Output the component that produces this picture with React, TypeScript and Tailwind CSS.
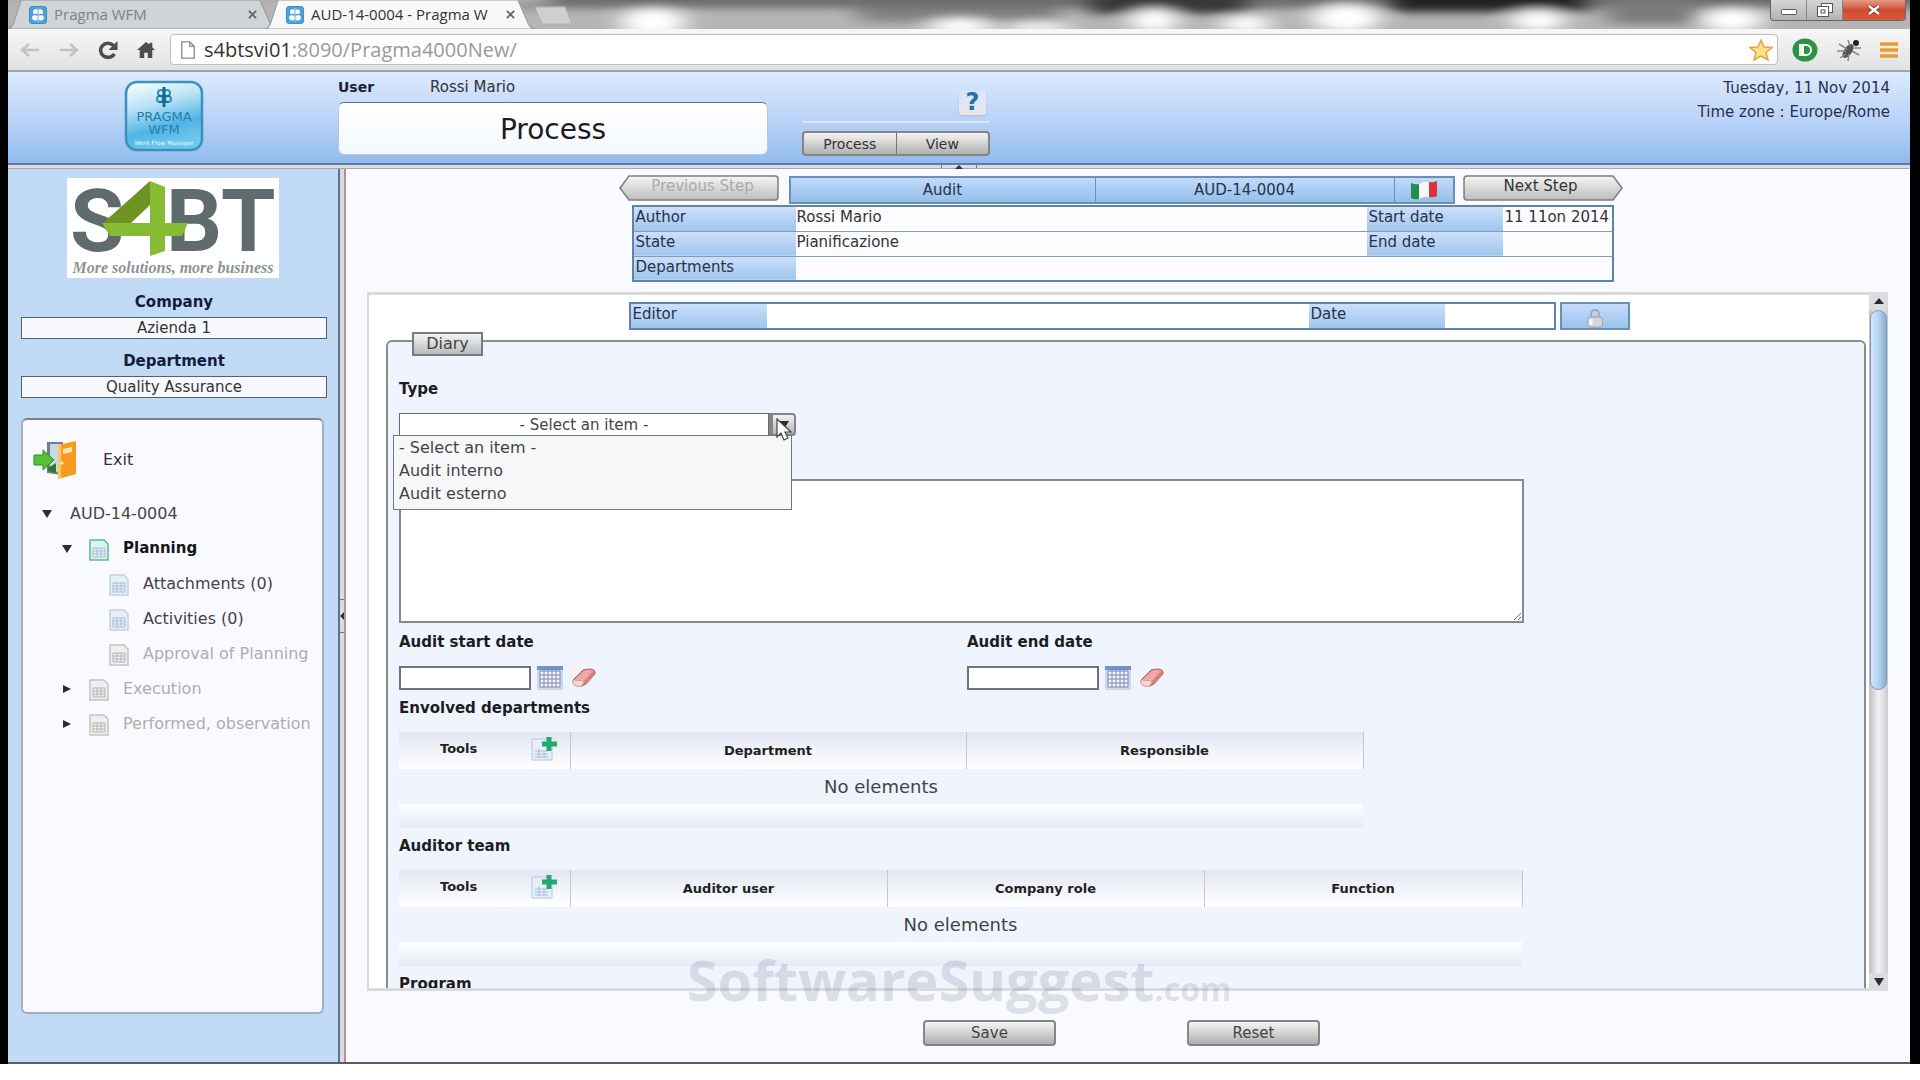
import { useState } from "react";
import type { ReactNode } from "react";

interface TreeItem {
  label: string;
  level: number;
  arrow?: "down" | "right";
  icon?: "active" | "normal" | "disabled";
}

interface GridColumn {
  label: string;
  width: string;
}

const treeItems: TreeItem[] = [
  { label: "AUD-14-0004", level: 0, arrow: "down" },
  { label: "Planning", level: 1, arrow: "down", icon: "active" },
  { label: "Attachments (0)", level: 2, icon: "normal" },
  { label: "Activities (0)", level: 2, icon: "normal" },
  { label: "Approval of Planning", level: 2, icon: "disabled" },
  { label: "Execution", level: 1, arrow: "right", icon: "disabled" },
  { label: "Performed, observation", level: 1, arrow: "right", icon: "disabled" },
];

const auditTypes = ["- Select an item -", "Audit interno", "Audit esterno"];

const departmentColumns: GridColumn[] = [
  { label: "Department", width: "w-[396px]" },
  { label: "Responsible", width: "w-[397px]" },
];

const teamColumns: GridColumn[] = [
  { label: "Auditor user", width: "w-[317px]" },
  { label: "Company role", width: "w-[317px]" },
  { label: "Function", width: "w-[318px]" },
];

/* ---------- icons ---------- */

function Emblem({ className }: { className?: string }) {
  return (
    <svg viewBox="0 0 20 20" className={className}>
      <rect x="0.5" y="0.5" width="19" height="19" rx="3" fill="#4aa3d8" stroke="#2f86bd" />
      <ellipse cx="7.5" cy="6.5" rx="3" ry="3" fill="#fff" />
      <ellipse cx="12.5" cy="6.5" rx="3" ry="3" fill="#fff" />
      <ellipse cx="7" cy="13" rx="3.5" ry="3" fill="#fff" />
      <ellipse cx="13" cy="13" rx="3.5" ry="3" fill="#fff" />
      <path d="M10 2v16" stroke="#8cc4e6" strokeWidth="1.5" />
      <circle cx="7.5" cy="9.5" r="1" fill="#2f86bd" />
      <circle cx="12.5" cy="9.5" r="1" fill="#2f86bd" />
    </svg>
  );
}

function PragmaLogo() {
  return (
    <svg viewBox="0 0 80 72" className="h-[72px] w-20">
      <defs>
        <linearGradient id="pragma" x1="0" y1="0" x2="0.3" y2="1">
          <stop offset="0" stopColor="#ffffff" />
          <stop offset="0.4" stopColor="#b8e2f6" />
          <stop offset="0.75" stopColor="#4fb4e3" />
          <stop offset="1" stopColor="#6cc6ec" />
        </linearGradient>
      </defs>
      <rect x="2" y="2" width="76" height="68" rx="11" fill="url(#pragma)" stroke="#3f8fbf" strokeWidth="2.5" />
      <g fill="none" stroke="#2b93c4" strokeWidth="2">
        <circle cx="37" cy="13" r="3" />
        <circle cx="43" cy="13" r="3" />
        <circle cx="36" cy="19" r="3" />
        <circle cx="44" cy="19" r="3" />
      </g>
      <path d="M40 7v20" stroke="#17688f" strokeWidth="3" />
      <path d="M34 16h12M35 22h10" stroke="#17688f" strokeWidth="1.5" />
      <text x="40" y="41" textAnchor="middle" fontSize="13" fill="#2580b0" fontFamily="DejaVu Sans, sans-serif">
        PRAGMA
      </text>
      <text x="40" y="54" textAnchor="middle" fontSize="13" fill="#2580b0" fontFamily="DejaVu Sans, sans-serif">
        WFM
      </text>
      <text x="40" y="65" textAnchor="middle" fontSize="6" fill="#e9f8ff" fontFamily="DejaVu Sans, sans-serif">
        Work Flow Manager
      </text>
    </svg>
  );
}

function CompanyLogo() {
  return (
    <svg viewBox="0 0 212 100" className="h-[100px] w-[212px] overflow-visible bg-white">
      <g fontFamily="Roboto, sans-serif" fontWeight="700" fontSize="88" fill="#5f6b6c">
        <text x="3" y="73">S</text>
        <text x="99" y="73">B</text>
        <text x="154" y="73">T</text>
      </g>
      <path d="M83 3 L36 45 L64 45 L83 27z" fill="#6f9322" />
      <path d="M83 3 L98 9 L98 73 L83 78z" fill="#86bc34" />
      <path d="M35 45 L121 45 L115 58 L43 58z" fill="#86bc34" />
      <text
        x="106"
        y="95"
        textAnchor="middle"
        fontSize="16"
        fontStyle="italic"
        fontWeight="700"
        fill="#8b9494"
        fontFamily="Liberation Serif, serif"
      >
        More solutions, more business
      </text>
    </svg>
  );
}

function ExitIcon() {
  return (
    <svg viewBox="0 0 44 40" className="h-10 w-11">
      <path d="M14 2h16v33l-16-2z" fill="#6f7f8c" />
      <path d="M17 4h10v28l-10-1z" fill="#c9d8e2" />
      <path d="M25 5 L43 1 L43 34 L25 39z" fill="#f79a1e" />
      <path d="M25 5 L28 4 L28 38 L25 39z" fill="#ffc56b" />
      <path d="M30 9 l9-2 v5 l-9 2z" fill="#ffe6b5" />
      <circle cx="29" cy="23" r="1.5" fill="#fff3d6" />
      <path d="M15 28l8-5v10l-8-2z" fill="#2f7a22" />
      <path d="M1 15h9v-5l11 10-11 10v-5H1z" fill="#56c136" stroke="#2f8f1f" />
    </svg>
  );
}

function SheetIcon({ kind }: { kind: "active" | "normal" | "disabled" }) {
  const stroke = kind === "active" ? "#55bf85" : kind === "normal" ? "#c3d1e0" : "#c4c4c4";
  const fill = kind === "active" ? "#dcf5ec" : kind === "normal" ? "#e6eff8" : "#efefef";
  const line = kind === "active" ? "#b3b6de" : kind === "normal" ? "#a9bdd6" : "#b4b4b4";
  return (
    <svg viewBox="0 0 20 22" className="mt-[3px] h-[22px] w-5 shrink-0">
      <path d="M1 1h14l4 4v16H1z" fill={fill} stroke={stroke} strokeWidth="1.5" />
      <path d="M4 9h12v9H4zM4 12h12M4 15h12M8 9v9M12 9v9" fill="none" stroke={line} />
    </svg>
  );
}

function CalendarIcon() {
  return (
    <svg viewBox="0 0 26 24" className="h-6 w-[26px]">
      <rect x="0" y="0" width="26" height="24" fill="#c9d9ee" />
      <rect x="0" y="0" width="26" height="4" fill="#6e95c6" />
      <rect x="3" y="5" width="20" height="16" fill="#f4f5fb" />
      <path
        d="M3 5h20M3 9h20M3 13h20M3 17h20M3 21h20M3 5v16M7 5v16M11 5v16M15 5v16M19 5v16M23 5v16"
        stroke="#7f83b4"
        fill="none"
      />
    </svg>
  );
}

function EraserIcon() {
  return (
    <svg viewBox="0 0 26 20" className="h-5 w-[26px]">
      <path d="M2 12 L12 2 Q14 1 20 1 Q25 2 24 6 L15 16 Q12 19 6 18 Q1 17 2 12z" fill="#d97f7f" stroke="#b76d6d" />
      <path d="M3 12 L13 3 Q18 1 22 3 L13 13z" fill="#eda9a6" />
      <path d="M2 12 l11 1 -2 5 q-4 1 -8-1 q-2-1-1-5z" fill="#f7d6d1" stroke="#c98d88" strokeWidth="0.5" />
    </svg>
  );
}

function AddRowIcon() {
  return (
    <svg viewBox="0 0 26 24" className="h-6 w-[26px]">
      <path d="M1 2h14l6 5v16H1z" fill="#e6eff8" stroke="#b5c8dc" />
      <path d="M4 14h13M4 17h13M4 20h13M8 11v10M13 14v7" stroke="#a9bdd6" />
      <path d="M18 0v14M11 7h15" stroke="#27a872" strokeWidth="5" />
    </svg>
  );
}

function LockIcon() {
  return (
    <svg viewBox="0 0 18 20" className="h-5 w-[18px]">
      <path d="M5 10V6a4 4 0 0 1 8 0v4" fill="none" stroke="#a5adb8" strokeWidth="2" />
      <rect x="1.5" y="9" width="15" height="10" rx="3" fill="#d5d5d5" stroke="#9fa2a8" />
      <path d="M5 11v6" stroke="#f5f5f5" strokeWidth="3" />
    </svg>
  );
}

function FlagIcon() {
  return (
    <svg viewBox="0 0 28 20" className="h-5 w-7">
      <path d="M1 3 Q5 5 9 4 V19 Q5 20 1 18z" fill="#1f8f4e" />
      <path d="M9 4 Q14 1 19 2 V17 Q14 16 9 19z" fill="#f7f7f7" />
      <path d="M19 2 Q23 3 27 1 V16 Q23 18 19 17z" fill="#dc3434" />
    </svg>
  );
}

function Triangle({ dir }: { dir: "up" | "down" | "right" }) {
  const shapes = {
    up: "M5 2 L10 8 L0 8z",
    down: "M0 1 L10 1 L5 9z",
    right: "M1 1 L9 5 L1 9z",
  };
  return (
    <svg viewBox="0 0 10 10" className="h-[10px] w-[10px] shrink-0">
      <path d={shapes[dir]} fill="#2c2c2c" />
    </svg>
  );
}

/* ---------- browser chrome ---------- */

function BrowserTab({ title, active }: { title: string; active?: boolean }) {
  return (
    <div className={active ? "relative -ml-3 h-[29px] w-[270px]" : "relative h-[29px] w-[269px]"}>
      <svg viewBox="0 0 268 29" preserveAspectRatio="none" className="absolute inset-0 h-full w-full">
        <path d="M0 29 Q4 28 6 22 L13 0 H251 L261 23 Q263 28 268 29z" fill={active ? "#f8f8f8" : "#cfd5d6"} stroke="#9a9a9a" />
      </svg>
      <button
        type="button"
        className="relative flex h-full w-full items-center pr-5 pl-5 text-left font-['Open_Sans',sans-serif] text-[15px]"
      >
        <Emblem className="h-[18px] w-5 shrink-0" />
        <span className={active ? "ml-[6px] flex-1 truncate text-[#333]" : "ml-[6px] flex-1 truncate text-[#7d8283]"}>{title}</span>
        <svg viewBox="0 0 10 10" className="h-[9px] w-[9px]">
          <path d="M1 1l8 8M9 1l-8 8" stroke="#666" strokeWidth="2" />
        </svg>
      </button>
    </div>
  );
}

function BrowserChrome() {
  return (
    <div>
      <div className="relative flex h-[29px] overflow-hidden bg-[#b5b5b5]">
        <svg viewBox="0 0 1902 29" preserveAspectRatio="none" className="absolute inset-0 h-full w-full">
          <defs>
            <filter id="glass" x="-10%" y="-80%" width="120%" height="260%">
              <feGaussianBlur stdDeviation="12 4" />
            </filter>
          </defs>
          <g filter="url(#glass)">
            <rect x="500" y="-14" width="1420" height="22" fill="#6c6c6c" />
            <rect x="1080" y="-10" width="160" height="24" fill="#383838" />
            <rect x="1380" y="-10" width="200" height="22" fill="#222" />
            <rect x="850" y="8" width="200" height="14" fill="#828282" />
            <rect x="1600" y="0" width="90" height="24" fill="#7c7c7c" />
            <rect x="-20" y="-10" width="560" height="14" fill="#b5aeae" />
            <ellipse cx="645" cy="22" rx="32" ry="14" fill="#fff" />
            <ellipse cx="952" cy="26" rx="32" ry="8" fill="#fff" />
            <ellipse cx="1030" cy="27" rx="32" ry="6" fill="#f4f4f4" />
            <ellipse cx="1146" cy="20" rx="24" ry="12" fill="#fff" />
            <ellipse cx="1238" cy="24" rx="24" ry="9" fill="#fff" />
            <ellipse cx="1338" cy="18" rx="34" ry="14" fill="#fff" />
            <ellipse cx="1530" cy="20" rx="26" ry="11" fill="#fff" />
            <ellipse cx="1724" cy="20" rx="30" ry="12" fill="#fff" />
          </g>
        </svg>
        <BrowserTab title="Pragma WFM" />
        <BrowserTab title="AUD-14-0004 - Pragma W" active />
        <svg viewBox="0 0 40 29" className="relative h-[29px] w-10">
          <path d="M0 7 H30 L37 24 H7z" fill="#cfcfcf" stroke="#b0b0b0" />
        </svg>
        <div className="relative mr-1 ml-auto flex h-[21px] overflow-hidden rounded-b border border-t-0 border-[#666] bg-gradient-to-b from-[#d5d5d5] to-[#b3b3b3]">
          <button type="button" aria-label="Minimize" className="flex w-9 items-center justify-center border-r border-[#888]">
            <svg viewBox="0 0 16 6" className="mt-1 h-[6px] w-4">
              <rect x="0.5" y="0.5" width="15" height="5" rx="1" fill="#fff" stroke="#555" />
            </svg>
          </button>
          <button type="button" aria-label="Restore" className="flex w-9 items-center justify-center border-r border-[#888]">
            <svg viewBox="0 0 16 14" className="h-[14px] w-4">
              <rect x="4.5" y="0.5" width="11" height="9" fill="#fff" stroke="#555" />
              <rect x="0.5" y="3.5" width="11" height="10" fill="#fff" stroke="#555" />
              <rect x="4" y="7" width="4" height="3" fill="none" stroke="#555" />
            </svg>
          </button>
          <button type="button" aria-label="Close" className="flex w-[62px] items-center justify-center bg-gradient-to-b from-[#e39a87] via-[#cf4a2e] to-[#d9593a]">
            <svg viewBox="0 0 12 10" className="h-[10px] w-3">
              <path d="M1 1l10 8M11 1l-10 8" stroke="#6d3226" strokeWidth="4" />
              <path d="M1 1l10 8M11 1l-10 8" stroke="#fff" strokeWidth="2.5" />
            </svg>
          </button>
        </div>
      </div>

      <div className="flex h-[43px] items-center border-b-2 border-[#98a5b5] bg-gradient-to-b from-[#f7f7f7] to-[#e2e2e2]">
        <div className="flex w-[162px] items-center gap-[19px] pl-3">
          <svg viewBox="0 0 20 16" className="h-4 w-5">
            <path d="M19 8H2M9 2L2 8l7 6" fill="none" stroke="#c2c2c2" strokeWidth="2.5" />
          </svg>
          <svg viewBox="0 0 20 16" className="h-4 w-5">
            <path d="M1 8h17M11 2l7 6-7 6" fill="none" stroke="#c2c2c2" strokeWidth="2.5" />
          </svg>
          <svg viewBox="0 0 20 18" className="h-[18px] w-5">
            <path d="M16.500 13A7.500 7 0 1 1 15.500 4.500" fill="none" stroke="#4d4d4d" strokeWidth="3.5" />
            <path d="M19.500 0v9h-9z" fill="#4d4d4d" />
          </svg>
          <svg viewBox="0 0 20 18" className="h-[18px] w-[18px]">
            <path d="M10 0L0 9h3v9h5v-6h4v6h5V9h3l-3-3V1h-3v2z" fill="#4d4d4d" />
          </svg>
        </div>
        <div className="flex h-[31px] flex-1 items-center rounded-sm border border-[#bdbdbd] bg-white pr-1 pl-[9px]">
          <svg viewBox="0 0 16 20" className="h-[18px] w-4">
            <path d="M1 1h9l5 5v13H1zM10 1v5h5" fill="#fff" stroke="#8d8d8d" strokeWidth="1.5" />
          </svg>
          <p className="ml-2 flex-1 font-['Open_Sans',sans-serif] text-[20px] leading-6 text-[#999]">
            <span className="text-[#333]">s4btsvi01</span>:8090/Pragma4000New/
          </p>
          <svg viewBox="0 0 24 22" className="h-[22px] w-6">
            <path d="M12 1l3 7 8 .5-6 5 2 7.5-7-4-7 4 2-7.500-6-5L9 8z" fill="#fbe08a" stroke="#e0a63c" strokeWidth="1.5" />
          </svg>
        </div>
        <div className="flex items-center gap-[18px] pr-3 pl-[14px]">
          <svg viewBox="0 0 26 24" className="h-6 w-[26px]">
            <ellipse cx="13" cy="12" rx="12.5" ry="11.5" fill="#2d9146" />
            <rect x="7" y="6" width="4" height="12" fill="#e5f5e8" />
            <path d="M11 7h3a5 5 0 0 1 0 10h-3z" fill="none" stroke="#fff" strokeWidth="2" />
          </svg>
          <svg viewBox="0 0 26 24" className="h-6 w-[26px]">
            <ellipse cx="12" cy="13" rx="4" ry="8" transform="rotate(35 12 13)" fill="#555" />
            <circle cx="20" cy="5" r="3" fill="#222" />
            <path d="M12 2l2 6M3 6l8 5M1 13h9M4 20l6-4M12 23l1-7M23 17l-7-4M25 10l-8 0" stroke="#888" strokeWidth="1.5" />
          </svg>
          <svg viewBox="0 0 18 18" className="h-[18px] w-[18px]">
            <path d="M0 3h18M0 9h18M0 15h18" stroke="#ec9a2d" strokeWidth="3.5" />
          </svg>
        </div>
      </div>
    </div>
  );
}

/* ---------- application ---------- */

function Header() {
  return (
    <header>
      <div className="flex h-[93px] items-start border-b-2 border-[#5f7da8] bg-gradient-to-b from-[#dceafd] via-[#bdd4f8] to-[#90bbee] pr-5">
        <div className="flex w-[330px] justify-center pt-2 pr-[18px]">
          <PragmaLogo />
        </div>
        <div className="w-[430px] pt-1 text-[15px] leading-[22px]">
          <p className="flex">
            <span className="w-[92px] text-[14px] font-bold text-[#1a2338]">User</span>
            <span>Rossi Mario</span>
          </p>
          <h1 className="mt-1 h-[53px] rounded-md border border-[#b9c7dc] border-t-[#5c7086] bg-gradient-to-b from-white to-[#f3f9ff] text-center text-[28px] leading-[54px] text-[#1c1c1c]">
            Process
          </h1>
        </div>
        <div className="ml-[34px] w-[188px] pt-[18px]">
          <div className="flex justify-end border-b-2 border-[#d8e6fa] pr-1 pb-[6px]">
            <button
              type="button"
              aria-label="Help"
              className="h-[25px] w-[27px] rounded bg-gradient-to-b from-[#d9e6fa] to-[#e9e6ea] text-[24px] leading-[25px] font-bold text-[#2272ac] shadow"
            >
              ?
            </button>
          </div>
          <div className="mt-2 flex h-[25px] overflow-hidden rounded border-2 border-[#858585] bg-gradient-to-b from-[#f5f5f5] to-[#b3b0b0] text-[14px] leading-5">
            <button type="button" className="flex-1 border-r border-[#777]">
              Process
            </button>
            <button type="button" className="flex-1">
              View
            </button>
          </div>
        </div>
        <div className="ml-auto pt-1 text-right text-[15px] leading-6 text-[#263050]">
          <p>Tuesday, 11 Nov 2014</p>
          <p>Time zone : Europe/Rome</p>
        </div>
      </div>
      <div className="flex h-1 justify-center border-b border-[#b3a3a3] bg-[#dcdce2]">
        <div className="flex w-9 justify-center border-x border-[#777]">
          <svg viewBox="0 0 8 4" className="h-1 w-2">
            <path d="M4 0l4 4H0z" fill="#333" />
          </svg>
        </div>
      </div>
    </header>
  );
}

function Sidebar() {
  return (
    <aside className="flex w-[330px] shrink-0 flex-col bg-[#c1daf5] pt-[9px] pr-[11px] pb-12 pl-[13px] text-[15px] leading-5">
      <div className="flex justify-center pr-[2px]">
        <CompanyLogo />
      </div>
      <p className="mt-[14px] text-center font-bold text-[#131c3a]">Company</p>
      <p className="mt-[5px] h-[22px] border border-[#555f72] bg-[#f8f9ff] text-center">Azienda 1</p>
      <p className="mt-3 text-center font-bold text-[#131c3a]">Department</p>
      <p className="mt-[5px] h-[22px] border border-[#555f72] bg-[#f8f9ff] text-center">Quality Assurance</p>
      <nav className="mt-5 mr-[3px] min-h-0 flex-1 overflow-hidden rounded-md border-2 border-[#a6aebb] border-t-[#77808c] bg-[#f9faff] text-base">
        <button type="button" className="mt-5 ml-[10px] flex items-center">
          <ExitIcon />
          <span className="ml-[26px]">Exit</span>
        </button>
        <ul className="mt-4">
          {treeItems.map((item) => (
            <li
              key={item.label}
              className={
                item.level === 0
                  ? "flex h-[35px] items-center pl-[19px] whitespace-nowrap"
                  : item.level === 1
                    ? "flex h-[35px] items-center pl-[39px] whitespace-nowrap"
                    : "flex h-[35px] items-center pl-[86px] whitespace-nowrap"
              }
            >
              {item.arrow && <Triangle dir={item.arrow} />}
              {item.icon && (
                <span className={item.level === 1 ? "ml-[17px]" : ""}>
                  <SheetIcon kind={item.icon} />
                </span>
              )}
              <a
                href="#"
                className={
                  item.icon === "active"
                    ? "ml-[14px] text-[15px] font-bold text-[#151515]"
                    : item.icon === "disabled"
                      ? "ml-[14px] text-[#aeaeae]"
                      : item.icon
                        ? "ml-[14px] text-[#444]"
                        : "ml-[18px] text-[#444]"
                }
              >
                {item.label}
              </a>
            </li>
          ))}
        </ul>
      </nav>
    </aside>
  );
}

function StepButton({ label, back, disabled }: { label: string; back?: boolean; disabled?: boolean }) {
  return (
    <button type="button" disabled={disabled} className="relative h-[26px] w-40 text-[15px] leading-[22px]">
      <svg viewBox="0 0 160 26" preserveAspectRatio="none" className="absolute inset-0 h-full w-full">
        <defs>
          <linearGradient id="step" x1="0" y1="0" x2="0" y2="1">
            <stop offset="0" stopColor="#f6f6f6" />
            <stop offset="1" stopColor="#bcbcbc" />
          </linearGradient>
        </defs>
        <path
          d={back ? "M1 13 L10 1 H156 Q159 1 159 4 V22 Q159 25 156 25 H10z" : "M159 13 L150 1 H4 Q1 1 1 4 V22 Q1 25 4 25 H150z"}
          fill="url(#step)"
          stroke="#7d7d7d"
          strokeWidth="1.5"
        />
      </svg>
      <span className={disabled ? "relative block pb-1 pl-2 text-[#aaa]" : "relative block pr-1 pb-1 text-[#333]"}>{label}</span>
    </button>
  );
}

function LabelCell({ children }: { children: ReactNode }) {
  return (
    <th scope="row" className="bg-gradient-to-b from-[#cde0fb] to-[#9fc5ec] p-0 pl-[2px] text-left align-top font-normal text-[#26324e]">
      {children}
    </th>
  );
}

function ProcessSummary() {
  return (
    <div className="flex flex-col items-center pt-[6px] pr-[14px] text-[15px] leading-5">
      <div className="flex">
        <StepButton label="Previous Step" back disabled />
        <div className="mt-px mr-2 ml-[10px] flex h-7 border-2 border-[#6b90b8] bg-gradient-to-b from-[#c3dafa] to-[#93bfea] text-center leading-[25px] text-[#26324e]">
          <p className="w-[305px] border-r border-[#6b90b8]">Audit</p>
          <p className="w-[299px] border-r border-[#6b90b8]">AUD-14-0004</p>
          <button type="button" aria-label="Italiano" className="flex w-[58px] items-center justify-center">
            <FlagIcon />
          </button>
        </div>
        <StepButton label="Next Step" />
      </div>
      <table className="mt-px mr-[-4px] w-[982px] table-fixed border-collapse border-2 border-[#5f84ab] bg-[#fcfcff]">
        <colgroup>
          <col className="w-[163px]" />
          <col />
          <col className="w-[136px]" />
          <col className="w-[110px]" />
        </colgroup>
        <tbody>
          <tr className="h-[25px] border-b border-[#7f9cba]">
            <LabelCell>Author</LabelCell>
            <td className="p-0 pl-px align-top">Rossi Mario</td>
            <LabelCell>Start date</LabelCell>
            <td className="p-0 pl-[2px] align-top whitespace-nowrap">11 11on 2014</td>
          </tr>
          <tr className="h-[25px] border-b border-[#7f9cba]">
            <LabelCell>State</LabelCell>
            <td className="p-0 pl-px align-top">Pianificazione</td>
            <LabelCell>End date</LabelCell>
            <td className="p-0" />
          </tr>
          <tr className="h-[25px]">
            <LabelCell>Departments</LabelCell>
            <td className="p-0" colSpan={3} />
          </tr>
        </tbody>
      </table>
    </div>
  );
}

function EditorBar() {
  return (
    <div className="flex justify-center gap-1 pt-[7px] pl-5 text-[15px] leading-5">
      <table className="h-7 w-[927px] table-fixed border-collapse border-2 border-[#5f84ab] bg-white">
        <colgroup>
          <col className="w-[137px]" />
          <col />
          <col className="w-[136px]" />
          <col className="w-[110px]" />
        </colgroup>
        <tbody>
          <tr>
            <LabelCell>Editor</LabelCell>
            <td className="p-0" />
            <LabelCell>Date</LabelCell>
            <td className="p-0" />
          </tr>
        </tbody>
      </table>
      <button
        type="button"
        aria-label="Lock"
        className="flex h-7 w-[70px] items-end justify-center border-2 border-[#6b90b8] bg-gradient-to-b from-[#c6dcfb] to-[#9cc3ee]"
      >
        <LockIcon />
      </button>
    </div>
  );
}

function TypeSelect() {
  const [value, setValue] = useState(auditTypes[0]);
  const [open, setOpen] = useState(true);

  const onPick = (type: string) => {
    setValue(type);
    setOpen(false);
  };

  return (
    <div className="relative mt-[14px] w-[397px]">
      <div className="flex h-[23px]">
        <select
          id="type"
          value={value}
          onChange={(e) => setValue(e.target.value)}
          className="w-[370px] appearance-none border border-[#6a6a6a] bg-white text-center text-[15px] leading-5 text-[#444] [text-align-last:center]"
        >
          {auditTypes.map((type) => (
            <option key={type}>{type}</option>
          ))}
        </select>
        <button
          type="button"
          aria-label="Open list"
          onClick={() => setOpen(!open)}
          className="flex w-[27px] items-center justify-center rounded-r border-2 border-l-4 border-[#858585] bg-gradient-to-b from-[#f3f3f3] to-[#b5b5b5]"
        >
          <Triangle dir="down" />
        </button>
      </div>
      {open && (
        <ul className="absolute top-[22px] -left-[6px] h-[75px] w-[399px] border border-[#777] bg-[#f6f7f9] text-base leading-[23px]">
          {auditTypes.map((type) => (
            <li key={type}>
              <button type="button" onClick={() => onPick(type)} className="block w-full pl-[5px] text-left text-[#444]">
                {type}
              </button>
            </li>
          ))}
        </ul>
      )}
      <svg viewBox="0 0 18 24" className="pointer-events-none absolute top-[5px] left-[377px] h-6 w-[18px]">
        <path d="M1 1v18l4-4 3 7 4-2-3-6h6z" fill="#fff" stroke="#444" strokeWidth="1.2" />
      </svg>
    </div>
  );
}

function DateField({ id, label }: { id: string; label: string }) {
  return (
    <div className="w-[568px]">
      <label htmlFor={id} className="block font-bold">
        {label}
      </label>
      <div className="mt-[14px] flex h-6 items-center">
        <input id={id} type="text" className="h-6 w-[132px] border-2 border-[#727272] bg-white px-1" />
        <button type="button" aria-label={`${label} calendar`} className="ml-[6px]">
          <CalendarIcon />
        </button>
        <button type="button" aria-label={`Clear ${label}`} className="ml-2">
          <EraserIcon />
        </button>
      </div>
    </div>
  );
}

function ElementGrid({ title, columns }: { title: string; columns: GridColumn[] }) {
  return (
    <section>
      <h2 className="font-bold">{title}</h2>
      <table className="mt-[14px] table-fixed border-collapse">
        <thead>
          <tr className="h-[37px] bg-gradient-to-b from-[#e3e7f3] to-white text-[13px] text-[#222]">
            <th className="w-[171px] border-r border-[#c3c8d6] p-0">
              <div className="flex items-center justify-between pr-[13px] pb-1 pl-[41px]">
                Tools
                <button type="button" aria-label={`Add to ${title}`}>
                  <AddRowIcon />
                </button>
              </div>
            </th>
            {columns.map((column) => (
              <th key={column.label} className={`${column.width} border-r border-[#c3c8d6] p-0`}>
                {column.label}
              </th>
            ))}
          </tr>
        </thead>
        <tbody>
          <tr className="h-[35px]">
            <td colSpan={columns.length + 1} className="p-0 text-center text-lg leading-6 text-[#444]">
              No elements
            </td>
          </tr>
        </tbody>
        <tfoot>
          <tr className="h-6 bg-gradient-to-b from-white to-[#e6eaf6]">
            <td colSpan={columns.length + 1} className="p-0" />
          </tr>
        </tfoot>
      </table>
    </section>
  );
}

function DiaryForm() {
  return (
    <div className="mt-[10px] mr-[3px] ml-[17px] rounded-t-md border-2 border-[#8b8b8b] bg-[#eff4ff] pl-[11px] text-[15px] leading-5 text-[#1d1d1d]">
      <button
        type="button"
        className="-mt-[10px] ml-[13px] block h-6 w-[71px] border-2 border-[#7b7b7b] bg-gradient-to-b from-[#f4f4f4] to-[#b9bbbf] text-base leading-5 text-[#444]"
      >
        Diary
      </button>
      <label htmlFor="type" className="mt-[23px] block font-bold">
        Type
      </label>
      <TypeSelect />
      <textarea aria-label="Description" className="mt-[43px] block h-36 w-[1125px] max-w-full border-2 border-[#858a92] bg-white" />
      <div className="mt-[9px] flex">
        <DateField id="start-date" label="Audit start date" />
        <DateField id="end-date" label="Audit end date" />
      </div>
      <div className="mt-2">
        <ElementGrid title="Envolved departments" columns={departmentColumns} />
      </div>
      <div className="mt-2">
        <ElementGrid title="Auditor team" columns={teamColumns} />
      </div>
      <h2 className="mt-2 pb-10 font-bold">Program</h2>
    </div>
  );
}

function Scrollbar() {
  return (
    <div className="flex w-[19px] shrink-0 flex-col items-center bg-gradient-to-r from-[#bdbdc3] via-[#f3f3f6] to-[#c9c9cf]">
      <div className="flex h-[18px] w-full items-center justify-center bg-[#dcdce0]">
        <Triangle dir="up" />
      </div>
      <div className="w-[17px] flex-[380] rounded-full border border-[#7b98b8] bg-gradient-to-r from-[#d3e7fb] via-[#b4d3f2] to-[#86aed6]" />
      <div className="flex-[284]" />
      <div className="flex h-[18px] w-full items-center justify-center bg-[#dcdce0]">
        <Triangle dir="down" />
      </div>
    </div>
  );
}

function ActionButton({ label }: { label: string }) {
  return (
    <button
      type="button"
      className="h-[26px] w-[133px] rounded border-2 border-[#858585] bg-gradient-to-b from-[#f5f5f5] to-[#b0b0b0] text-[15px] leading-5 text-[#444]"
    >
      {label}
    </button>
  );
}

export default function App() {
  return (
    <div className="flex h-screen flex-col bg-white pb-4 font-['DejaVu_Sans',sans-serif] text-[#333]">
      <div className="relative flex min-h-0 flex-1 flex-col border-r-[10px] border-l-8 border-black bg-[#f8faff]">
        <BrowserChrome />
        <Header />
        <div className="flex min-h-0 flex-1 border-b-2 border-[#5d5d63]">
          <Sidebar />
          <div className="flex w-2 shrink-0 flex-col justify-center border-r-2 border-l-2 border-r-[#a8989c] border-l-[#62718c] bg-[#dcdce2]">
            <div className="flex h-[34px] items-center border-y border-[#777]">
              <svg viewBox="0 0 4 8" className="h-2 w-1">
                <path d="M4 0v8L0 4z" fill="#333" />
              </svg>
            </div>
          </div>
          <main className="flex min-w-0 flex-1 flex-col pr-[22px] pl-[21px]">
            <ProcessSummary />
            <div className="mt-[10px] flex min-h-0 flex-1">
              <div className="min-w-0 flex-1 overflow-hidden border-y-[3px] border-l-2 border-[#d9dadd] bg-white">
                <EditorBar />
                <DiaryForm />
              </div>
              <Scrollbar />
            </div>
            <div className="mt-[29px] mb-4 flex justify-center gap-[131px] pr-3">
              <ActionButton label="Save" />
              <ActionButton label="Reset" />
            </div>
          </main>
        </div>
        <p className="pointer-events-none absolute inset-x-0 bottom-10 text-center font-['Open_Sans',sans-serif] text-[56px] leading-[70px] font-bold text-[#6b7280]/20">
          SoftwareSuggest<span className="text-[32px]">.com</span>
        </p>
      </div>
    </div>
  );
}
